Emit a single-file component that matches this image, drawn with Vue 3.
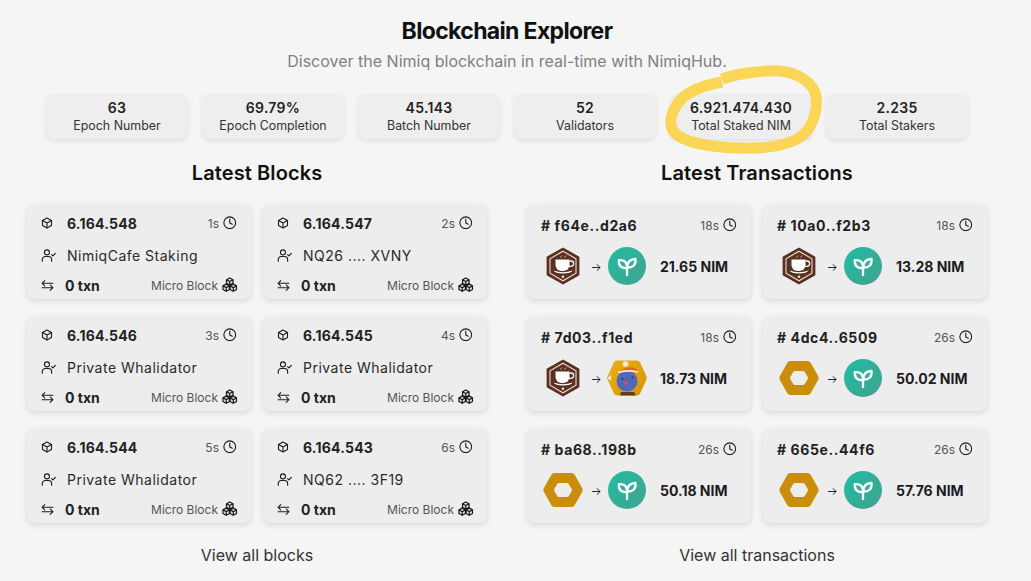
<script setup>
const stats = [
  { value: '63', label: 'Epoch Number' },
  { value: '69.79%', label: 'Epoch Completion' },
  { value: '45.143', label: 'Batch Number' },
  { value: '52', label: 'Validators' },
  { value: '6.921.474.430', label: 'Total Staked NIM' },
  { value: '2.235', label: 'Total Stakers' },
]

const blocks = [
  { height: '6.164.548', age: '1s', producer: 'NimiqCafe Staking' },
  { height: '6.164.547', age: '2s', producer: 'NQ26 .... XVNY' },
  { height: '6.164.546', age: '3s', producer: 'Private Whalidator' },
  { height: '6.164.545', age: '4s', producer: 'Private Whalidator' },
  { height: '6.164.544', age: '5s', producer: 'Private Whalidator' },
  { height: '6.164.543', age: '6s', producer: 'NQ62 .... 3F19' },
]

const txs = [
  { hash: 'f64e..d2a6', age: '18s', from: 'cafe', to: 'stake', amount: '21.65 NIM' },
  { hash: '10a0..f2b3', age: '18s', from: 'cafe', to: 'stake', amount: '13.28 NIM' },
  { hash: '7d03..f1ed', age: '18s', from: 'cafe', to: 'santa', amount: '18.73 NIM' },
  { hash: '4dc4..6509', age: '26s', from: 'nimiq', to: 'stake', amount: '50.02 NIM' },
  { hash: 'ba68..198b', age: '26s', from: 'nimiq', to: 'stake', amount: '50.18 NIM' },
  { hash: '665e..44f6', age: '26s', from: 'nimiq', to: 'stake', amount: '57.76 NIM' },
]
</script>

<template>
  <div class="page">
    <svg class="defs" aria-hidden="true">
      <defs>
        <linearGradient id="stakeGrad" x1="0" y1="0" x2="1" y2="1">
          <stop offset="0" stop-color="#21bca5" />
          <stop offset="1" stop-color="#41a38e" />
        </linearGradient>
        <linearGradient id="santaGrad" x1="0" y1="0" x2="1" y2="1">
          <stop offset="0" stop-color="#ecaf14" />
          <stop offset="1" stop-color="#d8930a" />
        </linearGradient>
      </defs>
      <symbol id="i-cube" viewBox="0 0 24 24">
        <path d="M12 2l9 5v10l-9 5-9-5V7z M3.300 7.200L12 12l8.700-4.800 M12 12v9.800" fill="none" stroke="currentColor" stroke-width="2.200" stroke-linejoin="round" />
      </symbol>
      <symbol id="i-clock" viewBox="0 0 24 24">
        <circle cx="12" cy="12" r="10.500" fill="none" stroke="currentColor" stroke-width="2" />
        <path d="M12 5.500v7l4.500 2.200" fill="none" stroke="currentColor" stroke-width="2" stroke-linecap="round" stroke-linejoin="round" />
      </symbol>
      <symbol id="i-user" viewBox="0 0 24 24">
        <circle cx="9.500" cy="7" r="4" fill="none" stroke="currentColor" stroke-width="1.800" />
        <path d="M2 21v-2.500a5 5 0 0 1 5-5h5a5 5 0 0 1 5 5V21 M17 10.500l2 2 4-4" fill="none" stroke="currentColor" stroke-width="1.800" stroke-linecap="round" stroke-linejoin="round" />
      </symbol>
      <symbol id="i-swap" viewBox="0 0 24 24">
        <path d="M7 3L2 8l5 5 M2 8h20 M17 11l5 5-5 5 M22 16H2" fill="none" stroke="currentColor" stroke-width="1.900" stroke-linecap="round" stroke-linejoin="round" />
      </symbol>
      <symbol id="i-cubes" viewBox="0 0 24 24">
        <g fill="none" stroke="currentColor" stroke-width="2" stroke-linejoin="round">
          <path d="M12 1.500l5 2.800v5.500l-5 2.800-5-2.800V4.300z M7.200 4.500L12 7l4.800-2.500 M12 7v5.500" />
          <path d="M6.500 11l5 2.800v5.500l-5 2.800-5-2.800v-5.500z M1.700 14L6.500 16.500l4.800-2.500 M6.500 16.500v5.500" />
          <path d="M17.500 11l5 2.800v5.500l-5 2.800-5-2.800v-5.500z M12.700 14l4.800 2.500 4.800-2.500 M17.500 16.500v5.500" />
        </g>
      </symbol>
      <symbol id="i-cafe" viewBox="1 0 34 38">
        <path d="M18 1.500l15.500 8.800v17.400L18 36.500 2.500 27.700V10.300z" fill="#5a3020" stroke="#5a3020" stroke-width="1.800" stroke-linejoin="round" />
        <path d="M18 4.200l13 7.500v14.600l-13 7.500-13-7.500V11.700z" fill="none" stroke="#e9dfd6" stroke-width="1.100" />
        <path d="M10.500 12.500h14v5.500a6 6 0 0 1-6 6h-2a6 6 0 0 1-6-6z" fill="#fff" />
        <path d="M24.500 14h1.500a2.300 2.300 0 0 1 0 5.300h-2" fill="none" stroke="#fff" stroke-width="1.300" />
        <path d="M8.500 23.500q9.500 3.500 19 0-1.500 3-9.500 3t-9.500-3z" fill="#fff" />
        <path d="M15.500 10.500l1.500-2 M19.500 10.500l1.500-2" stroke="#cdb9a8" stroke-width="1" />
        <circle cx="18" cy="29.800" r="1.300" fill="#e9dfd6" />
      </symbol>
      <symbol id="i-santa" viewBox="0 0 40 36">
        <path d="M10 .5h20q2 0 3 1.800l6.400 13.900q.8 1.800 0 3.600L33 33.700q-1 1.800-3 1.800H10q-2 0-3-1.800L.6 19.800q-.8-1.800 0-3.600L7 2.300Q8 .5 10 .5z" fill="url(#santaGrad)" />
        <path d="M.5 18l3.500-3v6z" fill="#fff3d0" />
        <circle cx="20" cy="21" r="10.500" fill="#4f69b8" />
        <path d="M13 11q7-6 16-2.500 2 1.500 1 3.500-8-3-17-1z" fill="#f1611e" />
        <circle cx="18.500" cy="4" r="2.800" fill="#fbe9d0" />
        <path d="M11 12.500q9-3 20-.5" fill="none" stroke="#fbe9d0" stroke-width="1.600" />
        <circle cx="19" cy="23" r="1.800" fill="#e8563f" />
        <circle cx="25.500" cy="17.500" r="1" fill="#23346e" />
        <circle cx="15.500" cy="19" r="1" fill="#23346e" />
        <path d="M13 35.500l1-3.500h13l2 3.500z" fill="#5a4318" />
      </symbol>
      <symbol id="i-nimiq" viewBox="0 0 40 36">
        <path fill-rule="evenodd" fill="#cb8d0a" d="M11.500 1h17q2.200 0 3.300 1.900l7.300 13.200q1 1.900 0 3.800l-7.300 13.200Q30.700 35 28.500 35h-17q-2.200 0-3.300-1.900L.9 19.900q-1-1.900 0-3.800L8.200 2.900Q9.300 1 11.500 1z M16 11q-1.200 0-1.800 1l-2.900 5q-.5 1 0 2l2.900 5q.6 1 1.800 1h8q1.200 0 1.800-1l2.900-5q.5-1 0-2l-2.900-5Q25.200 11 24 11z" />
      </symbol>
      <symbol id="i-stake" viewBox="0 0 38 38">
        <circle cx="19" cy="19" r="19" fill="url(#stakeGrad)" />
        <path d="M19 28V18 M19.200 20.500c0-5.500 2.800-8.300 8.300-8.500 .6 5.500-2.300 9-8.300 8.500z M18.800 21c-5.500 .5-8.300-2.300-8-7.800 5-.5 7.500 2 8 5.300" fill="none" stroke="#fff" stroke-width="2.300" stroke-linecap="round" stroke-linejoin="round" />
      </symbol>
    </svg>

    <header class="hero">
      <h1>Blockchain Explorer</h1>
      <p>Discover the Nimiq blockchain in real-time with NimiqHub.</p>
    </header>

    <section class="stats">
      <div v-for="s in stats" :key="s.label" class="stat">
        <strong>{{ s.value }}</strong>
        <span>{{ s.label }}</span>
      </div>
    </section>

    <main class="columns">
      <section class="col">
        <h2>Latest Blocks</h2>
        <div class="grid">
          <article v-for="b in blocks" :key="b.height" class="card block">
            <div class="row">
              <svg class="ic cube"><use href="#i-cube" /></svg>
              <b class="height">{{ b.height }}</b>
              <span class="age">{{ b.age }}</span>
              <svg class="ic clock"><use href="#i-clock" /></svg>
            </div>
            <div class="row">
              <svg class="ic user"><use href="#i-user" /></svg>
              <span class="producer">{{ b.producer }}</span>
            </div>
            <div class="row last">
              <svg class="ic swap"><use href="#i-swap" /></svg>
              <b class="txn">0 txn</b>
              <span class="kind">Micro Block</span>
              <svg class="ic cubes"><use href="#i-cubes" /></svg>
            </div>
          </article>
        </div>
        <a class="more">View all blocks</a>
      </section>

      <section class="col">
        <h2>Latest Transactions</h2>
        <div class="grid">
          <article v-for="t in txs" :key="t.hash" class="card tx">
            <div class="row">
              <b class="hash"># {{ t.hash }}</b>
              <span class="age">{{ t.age }}</span>
              <svg class="ic clock"><use href="#i-clock" /></svg>
            </div>
            <div class="row transfer">
              <svg class="addr from" :class="t.from"><use :href="'#i-' + t.from" /></svg>
              <span class="arrow">
                <svg width="9" height="9" viewBox="0 0 10 10"><path d="M0 5h9 M5.500 1.500L9 5 5.500 8.500" fill="none" stroke="#111" stroke-width="1" /></svg>
              </span>
              <svg class="addr to" :class="t.to"><use :href="'#i-' + t.to" /></svg>
              <b class="amount">{{ t.amount }}</b>
            </div>
          </article>
        </div>
        <a class="more">View all transactions</a>
      </section>
    </main>

    <!-- hand drawn marker ring over the staked stat -->
    <svg class="marker" width="1031" height="581" viewBox="0 0 1031 581">
      <path d="M205 141L225 158" stroke="#eeeeee" stroke-width="1" fill="none" />
      <path d="M722 82C704 85 686 92 678 103C671 113 668 124 674 132C684 143 708 147 738 148C768 149 792 145 804 134C814 124 818 108 816 96C813 82 798 73 780 71C760 70 736 74 722 79" fill="none" stroke="#fbd34c" stroke-width="11" stroke-linecap="butt" stroke-linejoin="round" opacity=".95" />
    </svg>
  </div>
</template>

<style scoped>
.page {
  position: relative;
  width: 1014px;
  height: 581px;
  overflow: visible;
  font-family: Inter, "Liberation Sans", sans-serif;
  color: #1c1c1e;
  padding-top: 18px;
  box-sizing: border-box;
}
.defs { position: absolute; width: 0; height: 0; }

.hero { text-align: center; }
.hero h1 {
  margin: 0;
  font-size: 23px;
  line-height: 26px;
  font-weight: 700;
  letter-spacing: -0.65px;
  color: #111;
}
.hero p {
  margin: 5px 0 0;
  font-size: 16px;
  line-height: 24px;
  color: #808080;
}

.stats {
  display: flex;
  justify-content: center;
  gap: 14px;
  margin-top: 21px;
}
.stat {
  width: 142px;
  height: 45px;
  box-sizing: border-box;
  padding-top: 5px;
  border-radius: 8px;
  background: #eeeeee;
  box-shadow: 0 2px 5px rgba(0,0,0,.09);
  display: flex;
  flex-direction: column;
  align-items: center;
}
.stat strong { font-size: 14px; line-height: 18px; font-weight: 600; letter-spacing: .3px; color: #222; }
.stat span { font-size: 12.4px; line-height: 18px; color: #333; }

.columns {
  display: flex;
  justify-content: center;
  gap: 40px;
  margin-top: 21px;
}
.col { width: 460px; display: flex; flex-direction: column; align-items: center; }
.col h2 {
  margin: 0;
  font-size: 20px;
  line-height: 26px;
  font-weight: 600;
  color: #111;
  letter-spacing: .1px;
}
.grid {
  margin-top: 18px;
  width: 100%;
  display: grid;
  grid-template-columns: 224px 224px;
  grid-auto-rows: 95px;
  column-gap: 12px;
  row-gap: 17px;
}
.card {
  background: #ededed;
  border-radius: 8px;
  box-shadow: 0 2px 6px rgba(0,0,0,.12);
  box-sizing: border-box;
  padding: 0 14px;
}
.row { display: flex; align-items: center; }
.block { display: grid; grid-template-rows: 38px 26px 1fr; }
.last { padding-top: 3px; }
.ic { flex: none; color: #1c1c1e; }
.cube { width: 12px; height: 12px; margin-right: 14px; }
.user { width: 15px; height: 15px; margin-right: 11px; }
.swap { width: 13px; height: 13px; margin-right: 11px; }
.clock { width: 13.5px; height: 13.5px; margin-left: 4px; margin-right: .5px; }
.cubes { width: 15.5px; height: 15.5px; margin-left: 4px; margin-right: -0.5px; }
.height { font-size: 14px; font-weight: 700; letter-spacing: .2px; color: #222; }
.age { margin-left: auto; font-size: 12px; color: #555; }
.producer { font-size: 14px; color: #2a2a2a; letter-spacing: .5px; }
.txn { font-size: 14px; font-weight: 700; color: #222; }
.kind { margin-left: auto; font-size: 12px; color: #555; }

.tx .row:first-child { height: 42px; }
.hash { font-size: 14px; font-weight: 700; letter-spacing: .6px; color: #222; }
.transfer { padding-left: 5px; margin-top: 1px; }
.addr { flex: none; }
.addr.cafe { width: 34px; height: 38px; }
.addr.nimiq { width: 40px; height: 36px; margin-left: -3px; margin-right: -3px; }
.addr.santa { width: 40px; height: 36px; margin-left: -1px; margin-right: -1px; }
.addr.stake { width: 38px; height: 38px; }
.arrow { width: 28px; box-sizing: border-box; display: flex; padding: 2px 0 0 12px; }
.amount { margin-left: 14px; font-size: 14px; font-weight: 700; color: #1c1c1e; white-space: nowrap; }

.more {
  margin-top: 22px;
  font-size: 16px;
  line-height: 20px;
  color: #333;
}

.marker { position: absolute; left: 0; top: 0; pointer-events: none; }
</style>

<style>
html, body { background: #f5f5f5; margin: 0; overflow: hidden; }
</style>
